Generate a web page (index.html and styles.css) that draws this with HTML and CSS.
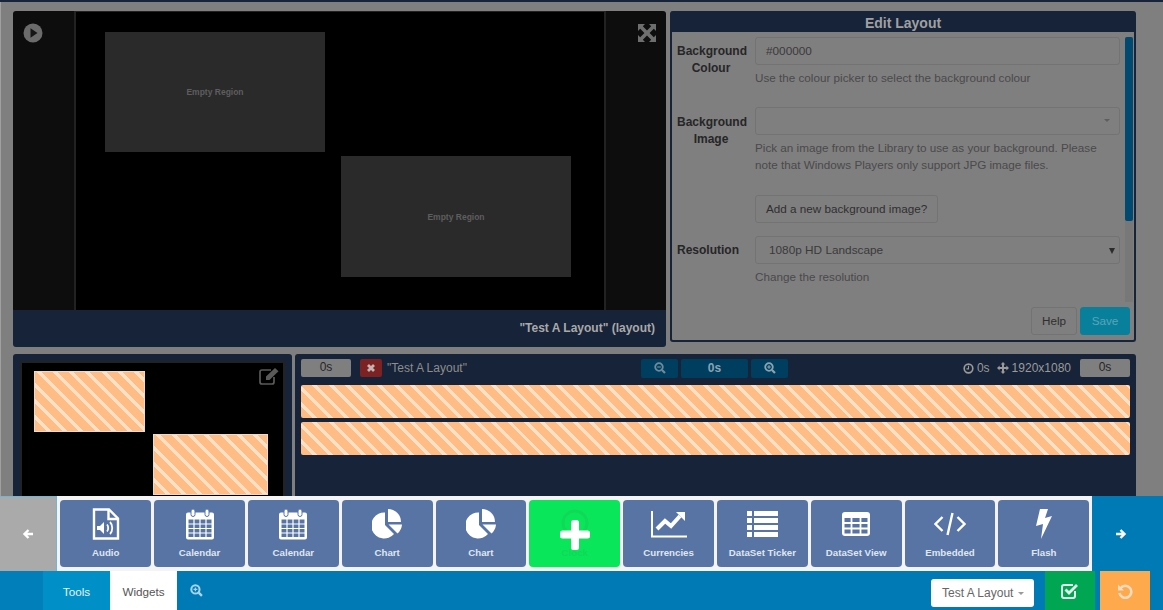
FILE: index.html
```html
<!DOCTYPE html>
<html lang="en">
<head>
    <meta charset="UTF-8">
    <title>Layout Designer</title>
    <link rel="stylesheet" href="styles.css">
</head>
<body>
<div class="app">
    <div class="top-strip"></div>

    <div class="top-row">
        <div class="preview">
            <div class="stage">
                <svg class="play-icon" viewBox="0 0 20 20"><circle cx="10" cy="10" r="9.5" fill="#6b6b6b"/><path d="M7.5 5.2 14.5 10l-7 4.8z" fill="#161616"/></svg>
                <div class="canvas">
                    <div class="region region-a">Empty Region</div>
                    <div class="region region-b">Empty Region</div>
                </div>
                <svg class="full-icon" viewBox="0 0 18 18"><path d="M0 0h7L4.8 2.2 9 6.4l4.2-4.2L11 0h7v7l-2.2-2.2L11.6 9l4.2 4.2L18 11v7h-7l2.2-2.2L9 11.6l-4.2 4.2L7 18H0v-7l2.2 2.2L6.400 9 2.200 4.800 0 7z" fill="#6e6e6e"/></svg>
            </div>
            <div class="caption">"Test A Layout" (layout)</div>
        </div>

        <div class="edit-panel">
            <div class="edit-title">Edit Layout</div>
            <div class="edit-body">
                <div class="scroll-track"><div class="scroll-thumb"></div></div>
                <div class="form-row colour-row">
                    <label class="form-label">Background Colour</label>
                    <div class="form-field">
                        <div class="text-input">#000000</div>
                        <p class="help">Use the colour picker to select the background colour</p>
                    </div>
                </div>
                <div class="form-row image-row">
                    <label class="form-label">Background Image</label>
                    <div class="form-field">
                        <div class="text-input select-input"><span class="caret"></span></div>
                        <p class="help">Pick an image from the Library to use as your background. Please note that Windows Players only support JPG image files.</p>
                    </div>
                </div>
                <div class="form-row button-row">
                    <div></div>
                    <div class="form-field"><span class="btn">Add a new background image?</span></div>
                </div>
                <div class="form-row">
                    <label class="form-label left">Resolution</label>
                    <div class="form-field">
                        <div class="text-input native-select">1080p HD Landscape<span class="caret dark"></span></div>
                        <p class="help">Change the resolution</p>
                    </div>
                </div>
                <div class="edit-footer">
                    <span class="btn">Help</span>
                    <span class="btn btn-save">Save</span>
                </div>
            </div>
        </div>
    </div>

    <div class="bottom-row">
        <div class="mini-panel">
            <div class="mini-canvas">
                <div class="mini-region mini-a"></div>
                <div class="mini-region mini-b"></div>
                <svg class="mini-edit" viewBox="0 0 21 18"><path d="M15 10v5a2 2 0 0 1-2 2H3a2 2 0 0 1-2-2V5a2 2 0 0 1 2-2h9" fill="none" stroke="#5a5a5a" stroke-width="1.7"/><path d="M7 9.500 16 .9l3.500 3.300-9 8.800H7z" fill="#5a5a5a"/></svg>
            </div>
        </div>
        <div class="timeline">
            <div class="timeline-head">
                <span class="pill">0s</span>
                <span class="delete-btn"><svg viewBox="0 0 10 10" width="10" height="10"><path d="M2 2l6 6M8 2l-6 6" stroke="#c4b4b4" stroke-width="2.800"/></svg></span>
                <span class="layout-name">"Test A Layout"</span>
                <div class="zoom-group">
                    <span class="zoom-btn"><svg viewBox="0 0 12 12" width="12" height="12"><circle cx="5" cy="5" r="3.800" fill="none" stroke="#6f8a9a" stroke-width="1.800"/><path d="M3.200 5h3.600" stroke="#6f8a9a" stroke-width="1.200"/><path d="M8 8l3 3" stroke="#6f8a9a" stroke-width="2.200"/></svg></span>
                    <span class="zoom-btn zoom-value">0s</span>
                    <span class="zoom-btn"><svg viewBox="0 0 12 12" width="12" height="12"><circle cx="5" cy="5" r="3.800" fill="none" stroke="#8aa3b0" stroke-width="1.800"/><path d="M3.200 5h3.600M5 3.200v3.600" stroke="#8aa3b0" stroke-width="1.200"/><path d="M8 8l3 3" stroke="#8aa3b0" stroke-width="2.200"/></svg></span>
                </div>
                <div class="timeline-info">
                    <svg viewBox="0 0 12 12" width="11" height="11"><circle cx="6" cy="6" r="4.700" fill="none" stroke="#9a9a9a" stroke-width="1.800"/><path d="M6 3v3.400H3.800" fill="none" stroke="#9a9a9a" stroke-width="1.200"/></svg>
                    <span>0s</span>
                    <svg class="move-icon" viewBox="0 0 12 12" width="12" height="12"><path d="M6 0l2.400 2.600H7v2.400h2.400V3.600L12 6 9.400 8.400V7H7v2.400h1.400L6 12 3.600 9.400H5V7H2.600v1.400L0 6l2.600-2.400V5H5V2.600H3.600z" fill="#9a9a9a"/></svg>
                    <span>1920x1080</span>
                    <span class="pill pill-end">0s</span>
                </div>
            </div>
            <div class="track"></div>
            <div class="track"></div>
        </div>
    </div>

    <div class="toolbar">
        <div class="nav-arrow nav-left">
            <svg viewBox="0 0 12 12" width="12" height="12"><path d="M11 6H3M6.500 2 2.500 6l4 4" fill="none" stroke="#fff" stroke-width="2.400"/></svg>
        </div>
        <div class="tiles">
            <div class="tile">
                <svg class="tile-icon" viewBox="0 0 28 32" width="28" height="32"><path d="M2 1.500h15l9 9V30.500H2z" fill="none" stroke="#fff" stroke-width="2.400"/><path d="M16.500 2v9h9" fill="none" stroke="#fff" stroke-width="2.400"/><path d="M5 18h3l4-4v12l-4-4H5z" fill="#fff"/><path d="M15 16.500c1.600 1.800 1.600 5.200 0 7M18 14c3 3 3 9 0 12" fill="none" stroke="#fff" stroke-width="1.800"/></svg>
                <span class="tile-label">Audio</span>
            </div>
            <div class="tile">
                <svg class="tile-icon" viewBox="0 0 30 32" width="30" height="32"><path d="M1 6.500a2 2 0 0 1 2-2h24a2 2 0 0 1 2 2v23a2 2 0 0 1-2 2H3a2 2 0 0 1-2-2z" fill="#fff"/><path d="M3.500 11.500h23v17.500h-23z" fill="#5874a5"/><path d="M3 16h24M3 20.500h24M3 25h24M9 11v18M15 11v18M21 11v18" stroke="#fff" stroke-width="1.200"/><rect x="6" y="1" width="4" height="7.500" rx="2" fill="#fff" stroke="#5874a5"/><rect x="20" y="1" width="4" height="7.500" rx="2" fill="#fff" stroke="#5874a5"/></svg>
                <span class="tile-label">Calendar</span>
            </div>
            <div class="tile">
                <svg class="tile-icon" viewBox="0 0 30 32" width="30" height="32"><path d="M1 6.500a2 2 0 0 1 2-2h24a2 2 0 0 1 2 2v23a2 2 0 0 1-2 2H3a2 2 0 0 1-2-2z" fill="#fff"/><path d="M3.500 11.500h23v17.500h-23z" fill="#5874a5"/><path d="M3 16h24M3 20.500h24M3 25h24M9 11v18M15 11v18M21 11v18" stroke="#fff" stroke-width="1.200"/><rect x="6" y="1" width="4" height="7.500" rx="2" fill="#fff" stroke="#5874a5"/><rect x="20" y="1" width="4" height="7.500" rx="2" fill="#fff" stroke="#5874a5"/></svg>
                <span class="tile-label">Calendar</span>
            </div>
            <div class="tile">
                <svg class="tile-icon" viewBox="0 0 30 32" width="30" height="32"><path d="M13 4.500V17l9 9a13 13 0 1 1-9-21.500z" fill="#fff"/><path d="M16 1a13 13 0 0 1 13 13H16z" fill="#fff"/><path d="M16.500 16.500H30a13 13 0 0 1-4.500 9z" fill="#fff"/></svg>
                <span class="tile-label">Chart</span>
            </div>
            <div class="tile">
                <svg class="tile-icon" viewBox="0 0 30 32" width="30" height="32"><path d="M13 4.500V17l9 9a13 13 0 1 1-9-21.500z" fill="#fff"/><path d="M16 1a13 13 0 0 1 13 13H16z" fill="#fff"/><path d="M16.500 16.500H30a13 13 0 0 1-4.500 9z" fill="#fff"/></svg>
                <span class="tile-label">Chart</span>
            </div>
            <div class="tile tile-add">
                <svg class="tile-icon" viewBox="0 0 30 32" width="30" height="32"><circle cx="15" cy="15" r="12" fill="none" stroke="#10d958" stroke-width="3"/></svg>
                <span class="tile-label">Clock</span>
                <svg class="plus-icon" viewBox="0 0 30 30"><path d="M11 2.500A2.500 2.500 0 0 1 13.500 0h3A2.500 2.500 0 0 1 19 2.500V10.500h8.500A2.500 2.500 0 0 1 30 13v3a2.500 2.500 0 0 1-2.500 2.500H19v9a2.500 2.500 0 0 1-2.500 2.500h-3a2.500 2.500 0 0 1-2.500-2.500v-9H2.500A2.500 2.500 0 0 1 0 16v-3a2.500 2.500 0 0 1 2.500-2.500H11z" fill="#fff"/></svg>
            </div>
            <div class="tile">
                <svg class="tile-icon" viewBox="0 0 36 32" width="36" height="32"><path d="M1 3v25.500h35" fill="none" stroke="#fff" stroke-width="2"/><path d="M6 21l8-8 6 5 9-10" fill="none" stroke="#fff" stroke-width="4"/><path d="M25 4h9v9z" fill="#fff"/></svg>
                <span class="tile-label">Currencies</span>
            </div>
            <div class="tile">
                <svg class="tile-icon" viewBox="0 0 32 32" width="32" height="32"><path d="M1 3h5v5H1zM8 3h24v5H8zM1 10h5v5H1zM8 10h24v5H8zM1 17h5v5H1zM8 17h24v5H8zM1 24h5v5H1zM8 24h24v5H8z" fill="#fff"/></svg>
                <span class="tile-label">DataSet Ticker</span>
            </div>
            <div class="tile">
                <svg class="tile-icon" viewBox="0 0 30 32" width="30" height="32"><rect x="1" y="4" width="28" height="24" rx="3" fill="#fff"/><path d="M3.500 10h23v15.500h-23z" fill="#5874a5"/><path d="M3 15h24M3 20.500h24M10.500 10v16M19.500 10v16" stroke="#fff" stroke-width="1.800"/></svg>
                <span class="tile-label">DataSet View</span>
            </div>
            <div class="tile">
                <svg class="tile-icon" viewBox="0 0 32 32" width="32" height="32"><path d="M8.500 9 1.500 16l7 7M23.500 9l7 7-7 7" fill="none" stroke="#fff" stroke-width="2.400"/><path d="M18.500 5 13.500 27" stroke="#fff" stroke-width="2.400"/></svg>
                <span class="tile-label">Embedded</span>
            </div>
            <div class="tile">
                <svg class="tile-icon" viewBox="0 0 18 32" width="18" height="32"><path d="M5 1h8l-3 9 7-2L6 31l2-15-7 2z" fill="#fff"/></svg>
                <span class="tile-label">Flash</span>
            </div>
        </div>
        <div class="nav-arrow nav-right">
            <svg viewBox="0 0 12 12" width="12" height="12"><path d="M1 6h8M5.500 2l4 4-4 4" fill="none" stroke="#fff" stroke-width="2.400"/></svg>
        </div>
    </div>

    <div class="tabbar">
        <div class="tab-spacer"></div>
        <div class="tab tab-tools">Tools</div>
        <div class="tab tab-active">Widgets</div>
        <svg class="tab-search" viewBox="0 0 12 12" width="13" height="13"><circle cx="5" cy="5" r="3.800" fill="none" stroke="#a6d4ea" stroke-width="1.900"/><path d="M3.200 5h3.600M5 3.200v3.600" stroke="#a6d4ea" stroke-width="1.200"/><path d="M8 8l3 3" stroke="#a6d4ea" stroke-width="2.200"/></svg>
        <div class="layout-select">Test A Layout<span class="caret"></span></div>
        <div class="action action-ok">
            <svg viewBox="0 0 18 16" width="18" height="16"><path d="M14 8v5a2 2 0 0 1-2 2H3a2 2 0 0 1-2-2V4a2 2 0 0 1 2-2h9" fill="none" stroke="#e6f5ec" stroke-width="2"/><path d="M4.500 6.500 8 10l8-8" fill="none" stroke="#e6f5ec" stroke-width="2.800"/></svg>
        </div>
        <div class="action action-undo">
            <svg viewBox="0 0 16 16" width="16" height="16"><path d="M3.500 5.200A6 6 0 1 1 2.400 10" fill="none" stroke="#f2dcc0" stroke-width="2.600"/><path d="M1 1.500v6h6z" fill="#f2dcc0"/></svg>
        </div>
    </div>
</div>
</body>
</html>
```

FILE: styles.css
```css
* {
    box-sizing: border-box;
}

html, body {
    margin: 0;
    height: 100%;
}

body {
    font-family: "Liberation Sans", Arial, sans-serif;
    font-size: 12px;
    background-color: #7f7f7f;
    box-shadow: inset 1px 0 #a0a0a0;
    overflow: hidden;
}

.app {
    display: flex;
    flex-direction: column;
    height: 610px;
    overflow: hidden;
}

.top-strip {
    height: 2px;
    background-color: #162338;
}

/* top half: preview and edit form */
.top-row {
    display: flex;
    align-items: flex-start;
    gap: 4px;
    margin-top: 9px;
    padding-left: 13px;
}

.preview {
    width: 653px;
    height: 336px;
    display: flex;
    flex-direction: column;
    border-radius: 3px;
    overflow: hidden;
}

.stage {
    position: relative;
    height: 299px;
    display: flex;
    justify-content: center;
    background-color: #0d0d0d;
}

.play-icon {
    position: absolute;
    left: 10px;
    top: 12px;
    width: 20px;
    height: 20px;
}

.full-icon {
    position: absolute;
    left: 625px;
    top: 13px;
    width: 18px;
    height: 18px;
}

.canvas {
    position: relative;
    width: 532px;
    height: 299px;
    margin-left: 1px;
    background-color: #000;
    border-style: solid;
    border-color: #222;
    border-width: 1px 2px 0;
}

.region {
    position: absolute;
    display: flex;
    align-items: center;
    justify-content: center;
    background-color: #2a2a2a;
    color: #5e5e5e;
    font-size: 8.500px;
    font-weight: bold;
}

.region-a {
    left: 29px;
    top: 20px;
    width: 220px;
    height: 120px;
}

.region-b {
    left: 265px;
    top: 144px;
    width: 230px;
    height: 121px;
}

.caption {
    height: 37px;
    line-height: 37px;
    padding-right: 11px;
    text-align: right;
    background-color: #162338;
    color: #a9a9a9;
    font-size: 12px;
    font-weight: bold;
}

.edit-panel {
    width: 466px;
    height: 331px;
    display: flex;
    flex-direction: column;
    border-radius: 3px;
    border: 2px solid #162338;
    border-top: 0;
    background-color: #162338;
    overflow: hidden;
}

.edit-title {
    height: 21px;
    line-height: 24px;
    text-align: center;
    color: #a0a0a0;
    font-size: 14px;
    font-weight: bold;
}

.edit-body {
    position: relative;
    flex: 1;
    background-color: #7f7f7f;
    padding: 5px 14px 0 5px;
    color: #262626;
}

.scroll-track {
    position: absolute;
    top: 5px;
    right: 1px;
    width: 8px;
    height: 265px;
    background-color: #787878;
}

.scroll-thumb {
    height: 184px;
    background-color: #004a72;
    border-radius: 2px;
}

.form-row {
    display: grid;
    grid-template-columns: 68px 1fr;
    gap: 10px;
}

.colour-row {
    height: 70px;
}

.image-row {
    height: 88px;
}

.image-row .form-label {
    padding-top: 7px;
}

.button-row {
    height: 41px;
}

.form-label {
    padding-top: 6px;
    line-height: 17px;
    font-weight: bold;
    text-align: center;
    color: #262626;
}

.form-label.left {
    text-align: left;
    white-space: nowrap;
}

.text-input {
    position: relative;
    height: 28px;
    line-height: 26px;
    padding-left: 10px;
    border: 1px solid #737373;
    border-radius: 3px;
    background-color: #7f7f7f;
    color: #3a3a3a;
    font-size: 11.800px;
}

.native-select {
    padding-left: 13px;
}

.caret {
    display: inline-block;
    margin-left: 5px;
    vertical-align: middle;
    border-top: 4px solid #5a5a5a;
    border-left: 3.500px solid transparent;
    border-right: 3.500px solid transparent;
}

.select-input .caret {
    position: absolute;
    right: 9px;
    top: 11px;
    border-top-color: #5e5e5e;
    border-left-width: 3px;
    border-right-width: 3px;
    border-top-width: 3px;
}

.caret.dark {
    position: absolute;
    right: 4px;
    top: 11px;
    border-top: 6px solid #2b2b2b;
    border-left-width: 3px;
    border-right-width: 3px;
}

.help {
    margin: 4px 0 0;
    line-height: 17px;
    color: #4a4a4a;
    font-size: 11.700px;
}

.btn {
    display: inline-block;
    height: 28px;
    line-height: 26px;
    padding: 0 10px;
    border: 1px solid #737373;
    border-radius: 3px;
    background-color: #7f7f7f;
    color: #2f2f2f;
    font-size: 11.700px;
}

.edit-footer {
    position: absolute;
    right: 4px;
    bottom: 5px;
    display: flex;
    gap: 3px;
}

.edit-footer .btn {
    width: 46px;
    padding: 0;
    text-align: center;
}

.edit-footer .btn-save {
    width: 50px;
    background-color: #09809b;
    border-color: #09809b;
    color: #5aa5b8;
}

/* bottom half: region thumbnail and timeline */
.bottom-row {
    display: flex;
    gap: 3px;
    height: 142px;
    margin-top: 7px;
    padding-left: 13px;
}

.mini-panel {
    width: 279px;
    padding: 7px 7px 0;
    background-color: #162338;
    border-radius: 3px 3px 0 0;
}

.mini-canvas {
    position: relative;
    height: 135px;
    background-color: #000;
    border-style: solid;
    border-color: #222;
    border-width: 2px 2px 0;
}

.mini-region {
    position: absolute;
    background-image: repeating-linear-gradient(45deg, #ffbc85 0, #ffbc85 8px, #ffe0c4 8px, #ffe0c4 11.500px);
    border: 1px solid #e8dccf;
}

.mini-a {
    left: 12px;
    top: 8px;
    width: 111px;
    height: 61px;
}

.mini-b {
    left: 131px;
    top: 71px;
    width: 115px;
    height: 61px;
}

.mini-edit {
    position: absolute;
    left: 237px;
    top: 4px;
    width: 21px;
    height: 18px;
}

.timeline {
    width: 841px;
    padding: 5px 6px 0;
    background-color: #162338;
    border-radius: 3px 3px 0 0;
}

.timeline-head {
    display: flex;
    align-items: center;
    height: 18px;
    margin-bottom: 8px;
    color: #8d8d8d;
}

.pill {
    width: 50px;
    height: 18px;
    line-height: 17px;
    text-align: center;
    background-color: #7f7f7f;
    color: #262626;
    border-radius: 2px;
}

.delete-btn {
    display: flex;
    align-items: center;
    justify-content: center;
    width: 22px;
    height: 18px;
    margin-left: 9px;
    background-color: #7c2222;
    border-radius: 2px;
}

.layout-name {
    margin-left: 5px;
    width: 254px;
}

.zoom-group {
    display: flex;
    gap: 3px;
}

.zoom-btn {
    display: flex;
    align-items: center;
    justify-content: center;
    width: 37px;
    height: 19px;
    background-color: #003e5f;
    border-radius: 2px;
    color: #8aa3b0;
}

.zoom-value {
    width: 67px;
    font-weight: bold;
}

.timeline-info {
    display: flex;
    align-items: center;
    gap: 3px;
    margin-left: auto;
    color: #9a9a9a;
}

.move-icon {
    margin-left: 4px;
}

.pill-end {
    margin-left: 6px;
}

.track {
    height: 33px;
    margin-bottom: 4px;
    border-radius: 2px;
    background-image: repeating-linear-gradient(45deg, #ffbc85 0, #ffbc85 8px, #ffe0c4 8px, #ffe0c4 11.500px);
}

/* widget toolbar */
.toolbar {
    display: flex;
    height: 75px;
    flex-shrink: 0;
}

.nav-arrow {
    display: flex;
    align-items: center;
    justify-content: center;
    flex-shrink: 0;
}

.nav-left {
    width: 57px;
    background-color: #aaa;
    border-top: 1px solid #6db6dc;
    border-right: 1px solid #6db6dc;
}

.nav-right {
    width: 71px;
    padding-right: 14px;
    background-color: #007ab5;
}

.tiles {
    flex: 1;
    display: flex;
    gap: 3px;
    padding: 4px 2.700px 4px 3.300px;
    background-color: #f4f4f4;
}

.tile {
    position: relative;
    flex: 1;
    display: flex;
    flex-direction: column;
    align-items: center;
    padding-top: 8px;
    background-color: #5874a5;
    border-radius: 4px;
}

.tile-icon {
    flex-shrink: 0;
}

.tile-label {
    margin-top: 7px;
    color: #dfe6f1;
    font-size: 9.700px;
    font-weight: bold;
    line-height: 12px;
    white-space: nowrap;
}

.tile-add {
    background-color: #0ae65a;
}

.tile-add .tile-label {
    color: #10d958;
}

.plus-icon {
    position: absolute;
    left: 31px;
    top: 20px;
    width: 30px;
    height: 30px;
}

/* bottom tab bar */
.tabbar {
    display: flex;
    align-items: center;
    height: 39px;
    flex-shrink: 0;
    background-color: #007ab5;
    color: #fff;
}

.tab-spacer {
    width: 43px;
    height: 100%;
    background-color: #007fbb;
}

.tab {
    width: 67px;
    height: 100%;
    line-height: 42px;
    text-align: center;
    font-size: 11.700px;
}

.tab-tools {
    background-color: #0090c8;
    color: #e4f3fa;
}

.tab-active {
    background-color: #fff;
    color: #555;
}

.tab-search {
    margin-left: 13px;
}

.layout-select {
    margin-left: auto;
    width: 103px;
    height: 28px;
    line-height: 28px;
    margin-top: 4px;
    padding-left: 11px;
    background-color: #fff;
    border-radius: 3px;
    color: #666;
}

.layout-select .caret {
    border-top-color: #999;
    border-left-width: 3px;
    border-right-width: 3px;
    border-top-width: 3px;
}

.action {
    display: flex;
    align-items: center;
    justify-content: center;
    width: 50px;
    height: 100%;
}

.action-ok {
    margin-left: 11px;
    background-color: #00a651;
}

.action-undo {
    margin-left: 5px;
    margin-right: 13px;
    background-color: #ffa94d;
}
```
